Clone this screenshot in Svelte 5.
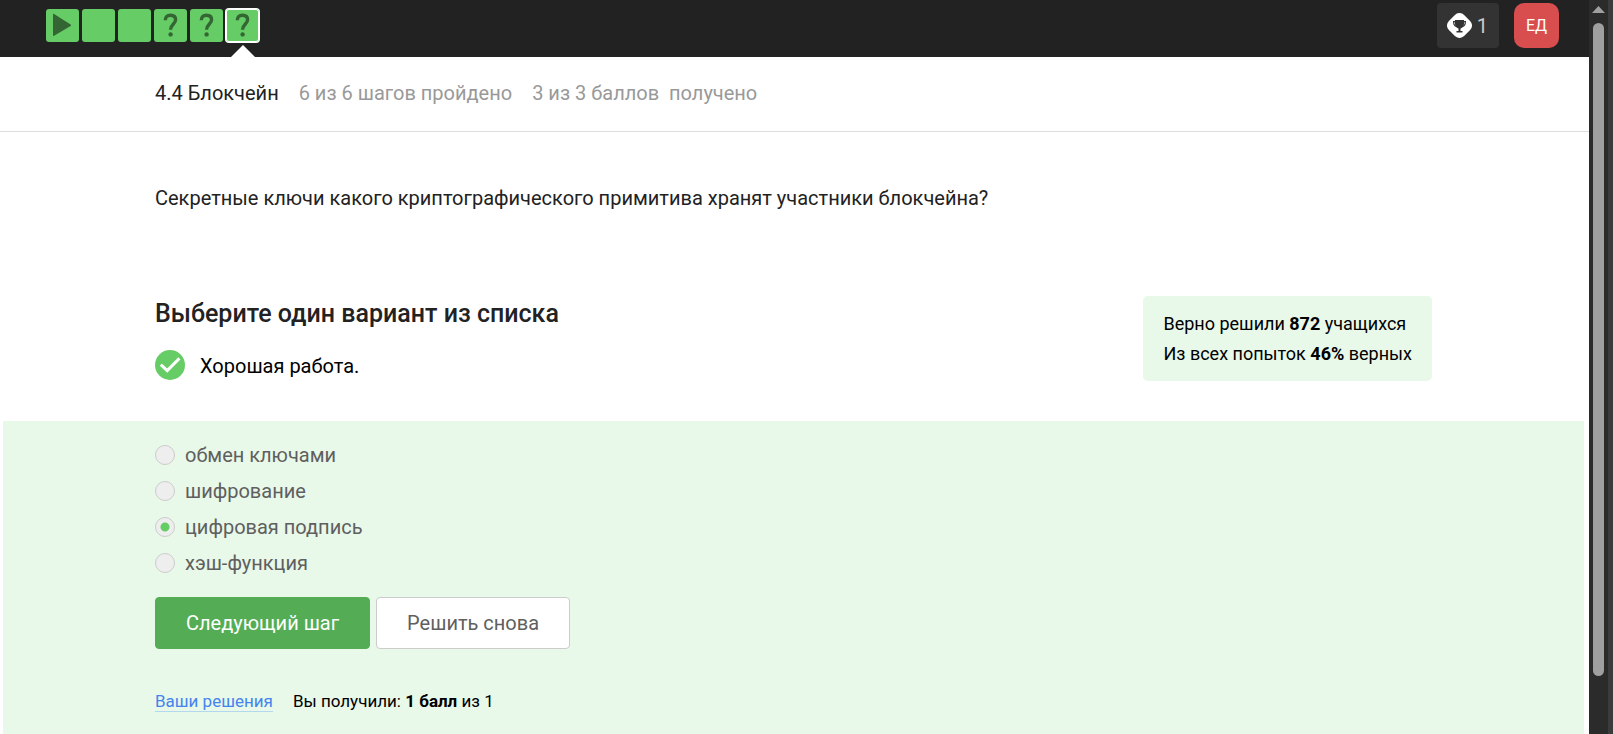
<script>
  const steps = [
    { kind: 'video', label: 'Видео' },
    { kind: 'text', label: 'Шаг 2' },
    { kind: 'text', label: 'Шаг 3' },
    { kind: 'quiz', label: 'Задача 4' },
    { kind: 'quiz', label: 'Задача 5' },
    { kind: 'quiz', label: 'Задача 6', active: true }
  ];
  const options = ['обмен ключами', 'шифрование', 'цифровая подпись', 'хэш-функция'];
  let selected = $state('цифровая подпись');
</script>

<div class="window">
  <div class="page">
    <header class="topbar">
      <nav class="steps">
        {#each steps as step}
          <a href="#step" class="step" class:active={step.active} aria-label={step.label}>
            {#if step.kind === 'video'}
              <svg viewBox="0 0 33 33"><path d="M7 5.6Q7 4.4 8.1 5L24.6 15.4Q25.6 16.2 24.6 17L8.1 26.8Q7 27.4 7 26.2Z" fill="#336633" /></svg>
            {:else if step.kind === 'quiz'}
              <svg viewBox="0 0 33 33">
                <path d="M11.3 11.2C11.3 7.9 13.3 6.2 16.4 6.2C19.7 6.2 21.6 8 21.6 10.8C21.6 15 16.6 15.2 16.6 20.8" fill="none" stroke="#336633" stroke-width="3.4" />
                <circle cx="16.6" cy="25.4" r="2.2" fill="#336633" />
              </svg>
            {/if}
          </a>
        {/each}
      </nav>
      <div class="account">
        <button class="awards" type="button">
          <svg width="25" height="25" viewBox="0 0 25 25">
            <rect x="1.75" y="1.75" width="21.5" height="21.5" rx="6.5" transform="rotate(45 12.5 12.5)" fill="#fff" />
            <path d="M8 7H17V10.5Q17 14.5 13.5 15.5V18H15.5V19.5H9.5V18H11.5V15.5Q8 14.5 8 10.5Z" fill="#333" />
            <path d="M8.4 8.6H6.6Q6.6 13 9.6 13.5M16.6 8.6H18.4Q18.4 13 15.4 13.5" fill="none" stroke="#333" stroke-width="1.2" />
          </svg>
          <span>1</span>
        </button>
        <button class="avatar" type="button">ЕД</button>
      </div>
    </header>

    <div class="progress">
      <span class="lesson">4.4 Блокчейн</span>
      <span>6 из 6 шагов пройдено</span>
      <span>3 из 3 баллов&nbsp; получено</span>
    </div>

    <main>
      <p class="question">Секретные ключи какого криптографического примитива хранят участники блокчейна?</p>

      <div class="summary">
        <div>
          <h1>Выберите один вариант из списка</h1>
          <div class="feedback">
            <svg width="30" height="30" viewBox="0 0 30 30">
              <circle cx="15" cy="15" r="15" fill="#66cc66" />
              <path d="M5.8 14.6L12.2 20.6L24.4 8.4" fill="none" stroke="#fff" stroke-width="3" />
            </svg>
            <span>Хорошая работа.</span>
          </div>
        </div>
        <div class="stats">
          <div>Верно решили <b>872</b> учащихся</div>
          <div>Из всех попыток <b>46%</b> верных</div>
        </div>
      </div>

      <form class="answer" onsubmit={(e) => e.preventDefault()}>
        <div class="options">
          {#each options as option}
            <label><input type="radio" name="answer" value={option} bind:group={selected} />{option}</label>
          {/each}
        </div>
        <div class="actions">
          <button class="next" type="submit">Следующий шаг</button>
          <button class="retry" type="button">Решить снова</button>
        </div>
        <div class="result">
          <a href="#solutions">Ваши решения</a>
          <span>Вы получили: <b>1 балл</b> из 1</span>
        </div>
      </form>
    </main>
  </div>

  <div class="scrollbar" aria-hidden="true">
    <svg width="13" height="7" viewBox="0 0 13 7"><path d="M0 7L6.5 0L13 7Z" fill="#9f9f9f" /></svg>
    <div class="thumb"></div>
    <div class="rest"></div>
  </div>
</div>

<style>
  :global(body) {
    margin: 0;
  }
  .window {
    display: flex;
    height: 100vh;
    overflow: hidden;
    font: 20px/30px Roboto, sans-serif;
    color: #222;
    background: #fff;
  }
  .window * {
    box-sizing: border-box;
  }
  button {
    font: inherit;
    cursor: pointer;
  }
  .page {
    flex: 1;
    min-width: 0;
    display: flex;
    flex-direction: column;
  }
  .topbar {
    display: flex;
    justify-content: space-between;
    align-items: flex-start;
    height: 57px;
    flex: none;
    padding: 3px 30px 0 46px;
    background: #222;
  }
  .steps {
    display: flex;
    gap: 3px;
    padding-top: 6px;
  }
  .step {
    position: relative;
    width: 33px;
    height: 33px;
    border-radius: 3px;
    background: #66cc66;
  }
  .step svg {
    display: block;
    width: 33px;
    height: 33px;
  }
  .step.active {
    box-shadow: inset 0 0 0 1px #fff, 0 0 0 1px #fff;
  }
  .step.active::after {
    content: '';
    position: absolute;
    top: 36px;
    left: 50%;
    margin-left: -12px;
    border: 12px solid transparent;
    border-top: 0;
    border-bottom-color: #fff;
  }
  .account {
    display: flex;
    gap: 15px;
  }
  .awards {
    display: flex;
    align-items: center;
    gap: 5px;
    height: 45px;
    padding: 0 11px 0 10px;
    border: 0;
    border-radius: 4px;
    background: #333;
    color: #ccc;
  }
  .avatar {
    width: 45px;
    height: 45px;
    padding: 0;
    border: 0;
    border-radius: 10px;
    background: #d84d4d;
    color: #fff;
    font-size: 16px;
  }
  .progress {
    display: flex;
    gap: 20px;
    padding: 21px 155px 23px;
    border-bottom: 1px solid #ddd;
    color: #999;
  }
  .lesson {
    color: #222;
  }
  main {
    flex: 1;
    display: flex;
    flex-direction: column;
    padding: 51px 5px 0 3px;
  }
  .question {
    margin: 0 152px 83px;
  }
  .summary {
    display: flex;
    justify-content: space-between;
    align-items: flex-start;
    margin: 0 152px 39px;
  }
  h1 {
    margin: 3px 0 21px;
    font-size: 25px;
    line-height: 30px;
    font-weight: 500;
  }
  .feedback {
    display: flex;
    align-items: flex-start;
    gap: 15px;
    line-height: 32px;
    color: #000;
  }
  .stats {
    padding: 13px 20px 12px;
    border-radius: 5px;
    background: #e8f8e9;
    color: #000;
    font-size: 18px;
  }
  .answer {
    flex: 1;
    padding: 16px 152px 24px;
    background: #e8f8e9;
  }
  .options {
    display: flex;
    flex-direction: column;
    align-items: flex-start;
  }
  label {
    display: flex;
    align-items: center;
    gap: 10px;
    line-height: 36px;
    color: #5f5f5f;
  }
  input {
    appearance: none;
    width: 20px;
    height: 20px;
    margin: 0;
    border: 1px solid #ccc;
    border-radius: 50%;
    background: #eee;
  }
  input:checked {
    background: radial-gradient(circle, #66cc66 4px, #eee 5px);
  }
  .actions {
    display: flex;
    gap: 6px;
    margin: 16px 0 40px;
  }
  .actions button {
    height: 52px;
    padding: 0 30px;
    border: 1px solid #ccc;
    border-radius: 4px;
    background: #fff;
    color: #5f5f5f;
  }
  .actions .next {
    border-color: #54ad54;
    background: #54ad54;
    color: #fff;
  }
  .result {
    display: flex;
    gap: 20px;
    font-size: 17px;
    line-height: 24px;
    color: #000;
  }
  .result a {
    height: 23px;
    border-bottom: 1px solid #b3d7ef;
    color: #4485ed;
    text-decoration: none;
  }
  .scrollbar {
    display: flex;
    flex-direction: column;
    align-items: center;
    width: 24px;
    padding: 6px 5px 0 0;
    background: linear-gradient(to right, #2b2b2b 19px, #3b3b3b 19px);
  }
  .scrollbar svg {
    flex: none;
    margin-bottom: 10px;
  }
  .thumb {
    flex: 653;
    width: 11px;
    border-radius: 6px;
    background: #9f9f9f;
  }
  .rest {
    flex: 58;
  }
</style>
